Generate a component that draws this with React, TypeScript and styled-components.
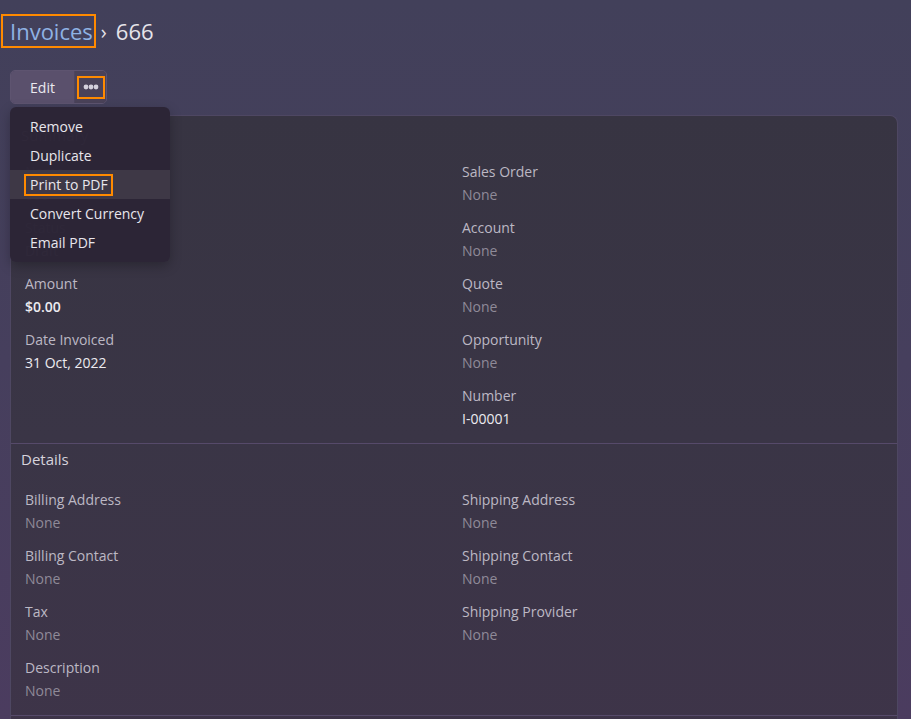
import * as React from 'react'
import styled, { createGlobalStyle } from 'styled-components'

const GlobalStyle = createGlobalStyle`
  html, body {
    margin: 0;
    padding: 0;
    height: 100%;
  }
  body {
    font-family: 'Open Sans', 'Noto Sans', sans-serif;
    background: linear-gradient(180deg, #42405a 0%, #463f5d 50%, #4b3c5f 100%);
    color: #e4e2ea;
    overflow: hidden;
  }
`

const Page = styled.div`
  width: 911px;
  height: 719px;
  padding: 15px 13px 0 10px;
  box-sizing: border-box;
  overflow: hidden;
`

// orange annotation boxes from the screenshot
const Marked = styled.span`
  outline: 2px solid #ff8a00;
`

const Crumbs = styled.h1`
  margin: 0;
  display: flex;
  align-items: center;
  height: 32px;
  font-size: 22px;
  font-weight: 400;
  color: #e6e4ea;
`

const CrumbLink = styled(Marked)`
  color: #8fb2e4;
  margin-left: -7px;
  padding: 0 1px 0 7px;
  line-height: 30px;
`

const Sep = styled.span`
  margin: 0 9px 0 7px;
  font-size: 20px;
`

const Toolbar = styled.div`
  position: relative;
  margin-top: 23px;
  display: inline-flex;
  height: 34px;
  border: 1px solid #5e5470;
  border-radius: 5px;
  box-sizing: border-box;
`

const EditButton = styled.button`
  width: 64px;
  background: #5a506c;
  border: none;
  border-right: 1px solid #4d4560;
  border-radius: 4px 0 0 4px;
  color: #ebe9f0;
  font-family: inherit;
  font-size: 14px;
  padding: 0;
`

const MoreButton = styled.button`
  width: 31px;
  display: flex;
  align-items: center;
  justify-content: center;
  background: #4a4259;
  border: none;
  border-radius: 0 4px 4px 0;
  padding: 0;
`

const Dots = styled(Marked)`
  display: flex;
  align-items: center;
  justify-content: center;
  width: 24px;
  height: 19px;
`

const Menu = styled.ul`
  position: absolute;
  top: 36px;
  left: -1px;
  z-index: 5;
  width: 160px;
  margin: 0;
  padding: 5px 0;
  list-style: none;
  background: rgba(44, 37, 54, 0.985);
  border-radius: 6px;
  box-shadow: 0 4px 12px rgba(0, 0, 0, 0.25);
`

const MenuItem = styled.li`
  height: 29px;
  display: flex;
  align-items: center;
  padding-left: 20px;
  font-size: 14px;
  color: #e8e6ec;
  background: ${p => (p.$active ? '#3e3846' : 'transparent')};
`

const MenuLabel = styled(Marked)`
  padding: 0 3px 0 4px;
  margin-left: -4px;
  line-height: 18px;
`

const Card = styled.div`
  margin-top: 11px;
  border: 1px solid #4e4762;
  border-bottom: none;
  border-radius: 8px 8px 0 0;
  background: linear-gradient(180deg, #373442 0%, #3a3546 50%, #3e3449 100%);
`

const Section = styled.section`
  padding: ${p => p.$top}px 0 3px;
  & + & {
    border-top: 1px solid #564a6a;
  }
`

const SectionTitle = styled.h2`
  margin: 0;
  padding-left: 10px;
  font-size: 15px;
  font-weight: 400;
  line-height: 22px;
  color: #d6d3dc;
`

const Fields = styled.div`
  display: grid;
  grid-template-columns: 437px 1fr;
  padding: ${p => p.$gap}px 14px 0;
`

const Column = styled.div`
  display: flex;
  flex-direction: column;
`

const Field = styled.div`
  margin-bottom: 10px;
  font-size: 14px;
  line-height: 23px;
`

const Label = styled.div`
  color: #bcb8c4;
`

const Value = styled.div`
  color: ${p => (p.$empty ? '#8f8a98' : '#ecebf0')};
  font-weight: ${p => (p.$strong ? 600 : 400)};
`

type Item = { label: string; value?: string; strong?: boolean }

const FieldColumn = ({ items }: { items: Item[] }) => (
  <Column>
    {items.map(it => (
      <Field key={it.label}>
        <Label>{it.label}</Label>
        <Value $empty={!it.value} $strong={it.strong}>
          {it.value || 'None'}
        </Value>
      </Field>
    ))}
  </Column>
)

const menuItems = ['Remove', 'Duplicate', 'Print to PDF', 'Convert Currency', 'Email PDF']

export default function App() {
  return (
    <>
      <GlobalStyle />
      <Page>
        <Crumbs>
          <CrumbLink>Invoices</CrumbLink>
          <Sep>›</Sep>
          666
        </Crumbs>
        <Toolbar>
          <EditButton>Edit</EditButton>
          <MoreButton>
            <Dots>
              <svg width="16" height="6" viewBox="0 0 16 6">
                <circle cx="3" cy="3" r="2.4" fill="#d4d0dc" />
                <circle cx="8" cy="3" r="2.4" fill="#d4d0dc" />
                <circle cx="13" cy="3" r="2.4" fill="#d4d0dc" />
              </svg>
            </Dots>
          </MoreButton>
          <Menu>
            {menuItems.map(m => (
              <MenuItem key={m} $active={m === 'Print to PDF'}>
                {m === 'Print to PDF' ? <MenuLabel>{m}</MenuLabel> : m}
              </MenuItem>
            ))}
          </Menu>
        </Toolbar>
        <Card>
          <Section $top={8}>
            <SectionTitle>Summary</SectionTitle>
            <Fields $gap={14}>
              <FieldColumn
                items={[
                  { label: 'Name', value: '666' },
                  { label: 'Status', value: 'Draft' },
                  { label: 'Amount', value: '$0.00', strong: true },
                  { label: 'Date Invoiced', value: '31 Oct, 2022' },
                ]}
              />
              <FieldColumn
                items={[
                  { label: 'Sales Order' },
                  { label: 'Account' },
                  { label: 'Quote' },
                  { label: 'Opportunity' },
                  { label: 'Number', value: 'I-00001' },
                ]}
              />
            </Fields>
          </Section>
          <Section $top={4}>
            <SectionTitle>Details</SectionTitle>
            <Fields $gap={18}>
              <FieldColumn
                items={[
                  { label: 'Billing Address' },
                  { label: 'Billing Contact' },
                  { label: 'Tax' },
                  { label: 'Description' },
                ]}
              />
              <FieldColumn
                items={[
                  { label: 'Shipping Address' },
                  { label: 'Shipping Contact' },
                  { label: 'Shipping Provider' },
                ]}
              />
            </Fields>
          </Section>
          <Section $top={40} />
        </Card>
      </Page>
    </>
  )
}
